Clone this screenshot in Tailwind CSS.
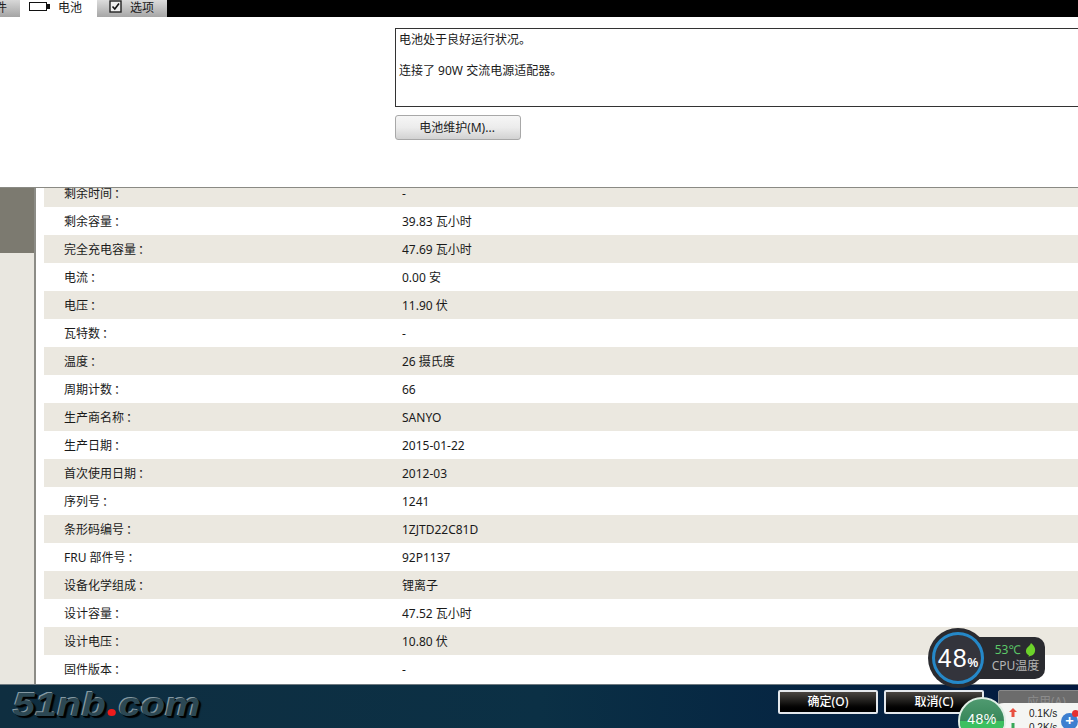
<!DOCTYPE html>
<html lang="zh"><head><meta charset="utf-8"><script src="https://cdn.jsdelivr.net/npm/@tailwindcss/browser@4"></script></head>
<body class="m-0 bg-white">
<div class="relative w-[1078px] h-[728px] overflow-hidden flex flex-col text-[12px] text-[#1a1a1a] font-['Noto_Sans','Noto_Sans_CJK_SC',sans-serif] [text-spacing-trim:space-all] [&_i]:not-italic [&_i]:relative [&_i]:left-[2px]">
  <!-- tab strip -->
  <div class="h-[17px] shrink-0 bg-black flex items-start leading-[14px]">
    <div class="w-[20px] h-[17px] bg-gradient-to-b from-[#d8d8d8] to-[#a4a4a4] text-[#222] overflow-hidden flex justify-end pr-[13px] pt-[1px]"><span class="shrink-0">件</span></div>
    <div class="w-[77px] h-[18px] bg-white flex items-center gap-[8px] pl-[9px] relative z-10 pb-[2px]">
      <svg width="21" height="9" viewBox="0 0 21 9" class="shrink-0 -mt-[3px]"><rect x="0.5" y="0.5" width="17" height="8" fill="#fff" stroke="#111"/><rect x="18" y="2" width="3" height="5" fill="#111"/></svg>
      <span>电池</span>
    </div>
    <div class="w-[70px] h-[17px] bg-gradient-to-b from-[#dcdcdc] to-[#a6a6a6] flex items-center gap-[8px] pl-[12px] pb-[1px]">
      <svg width="13" height="13" viewBox="0 0 13 13" class="shrink-0 -mt-[3px]"><rect x="1" y="1" width="11" height="11" fill="#eee" stroke="#222" stroke-width="1.4"/><path d="M3.5 6.5 L5.8 9 L10 3.5" fill="none" stroke="#111" stroke-width="1.6"/></svg>
      <span>选项</span>
    </div>
  </div>
  <!-- status panel -->
  <div class="h-[171px] shrink-0 bg-white pl-[395px] pt-[11px] border-b border-[#8a8a84]">
    <div class="h-[79px] w-[700px] border border-[#333] pl-[3px] pt-[3px] leading-[16px]">
      <p class="m-0">电池处于良好运行状况。</p>
      <p class="m-0 mt-[15px]">连接了 90W 交流电源适配器。</p>
    </div>
    <button class="block mt-[8px] w-[126px] h-[25px] rounded-[3px] border border-[#a8a8a8] bg-gradient-to-b from-[#f6f6f6] via-[#ececec] to-[#d2d2d2] text-[12px] text-[#222] leading-[20px] pr-[2px]">电池维护(M)...</button>
  </div>
  <!-- main -->
  <div class="flex-1 flex min-h-0">
    <div class="w-[34px] shrink-0 bg-[#e9e7e0]">
      <div class="h-[65px] bg-[#7c7a70]"></div>
    </div>
    <div class="w-[2px] shrink-0 bg-[#8c8c86]"></div>
    <div class="flex-1 bg-white pl-[8px] overflow-hidden">
      <div class="-mt-[9px] leading-[30px]">
        <div class="h-[28px] bg-[#ebe8e0] flex"><span class="w-[358px] pl-[20px]">剩余时间<i>：</i></span><span>-</span></div>
        <div class="h-[28px] flex"><span class="w-[358px] pl-[20px]">剩余容量<i>：</i></span><span>39.83 瓦小时</span></div>
        <div class="h-[28px] bg-[#ebe8e0] flex"><span class="w-[358px] pl-[20px]">完全充电容量<i>：</i></span><span>47.69 瓦小时</span></div>
        <div class="h-[28px] flex"><span class="w-[358px] pl-[20px]">电流<i>：</i></span><span>0.00 安</span></div>
        <div class="h-[28px] bg-[#ebe8e0] flex"><span class="w-[358px] pl-[20px]">电压<i>：</i></span><span>11.90 伏</span></div>
        <div class="h-[28px] flex"><span class="w-[358px] pl-[20px]">瓦特数<i>：</i></span><span>-</span></div>
        <div class="h-[28px] bg-[#ebe8e0] flex"><span class="w-[358px] pl-[20px]">温度<i>：</i></span><span>26 摄氏度</span></div>
        <div class="h-[28px] flex"><span class="w-[358px] pl-[20px]">周期计数<i>：</i></span><span>66</span></div>
        <div class="h-[28px] bg-[#ebe8e0] flex"><span class="w-[358px] pl-[20px]">生产商名称<i>：</i></span><span>SANYO</span></div>
        <div class="h-[28px] flex"><span class="w-[358px] pl-[20px]">生产日期<i>：</i></span><span>2015-01-22</span></div>
        <div class="h-[28px] bg-[#ebe8e0] flex"><span class="w-[358px] pl-[20px]">首次使用日期<i>：</i></span><span>2012-03</span></div>
        <div class="h-[28px] flex"><span class="w-[358px] pl-[20px]">序列号<i>：</i></span><span>1241</span></div>
        <div class="h-[28px] bg-[#ebe8e0] flex"><span class="w-[358px] pl-[20px]">条形码编号<i>：</i></span><span>1ZJTD22C81D</span></div>
        <div class="h-[28px] flex"><span class="w-[358px] pl-[20px]">FRU 部件号<i>：</i></span><span>92P1137</span></div>
        <div class="h-[28px] bg-[#ebe8e0] flex"><span class="w-[358px] pl-[20px]">设备化学组成<i>：</i></span><span>锂离子</span></div>
        <div class="h-[28px] flex"><span class="w-[358px] pl-[20px]">设计容量<i>：</i></span><span>47.52 瓦小时</span></div>
        <div class="h-[28px] bg-[#ebe8e0] flex"><span class="w-[358px] pl-[20px]">设计电压<i>：</i></span><span>10.80 伏</span></div>
        <div class="h-[28px] flex"><span class="w-[358px] pl-[20px]">固件版本<i>：</i></span><span>-</span></div>
      </div>
    </div>
  </div>
  <!-- footer -->
  <div class="h-[44px] shrink-0 border-t border-[#6f7a80] bg-gradient-to-r from-[#0f2e40] via-[#0b3045] to-[#03193f] flex items-start justify-between">
    <div class="flex items-baseline pl-[11px] font-['Liberation_Sans',sans-serif] font-bold italic text-[34px] leading-[38px] text-[#2c4854] origin-left scale-x-[1.17] [text-shadow:1px_1px_0_#000,2px_2px_1px_#000,-1px_-1px_0_#8498a2]">51nb<span class="inline-block w-[7px] h-[7px] rounded-full bg-[#ee1c1c] mx-[2px]"></span>com</div>
    <div class="flex gap-[6px] pt-[5px] -mr-[20px]">
      <button class="w-[100px] h-[24px] rounded-[2px] border-2 border-[#e4e8ec] bg-gradient-to-b from-[#4a4642] via-[#1b1a18] to-[#000] text-white text-[12px] font-medium">确定(O)</button>
      <button class="w-[100px] h-[24px] rounded-[2px] border-2 border-[#e4e8ec] bg-gradient-to-b from-[#4a4642] via-[#1b1a18] to-[#000] text-white text-[12px] font-medium">取消(C)</button>
      <button class="w-[100px] h-[24px] ml-[8px] rounded-[2px] border border-[#888] bg-[#6c6c6c] text-[#8c8c8c] text-[12px] text-left pl-[28px]">应用(A)</button>
    </div>
  </div>
  <!-- CPU widget overlay -->
  <div class="absolute left-[972px] top-[637px] w-[73px] h-[42px] rounded-r-[10px] bg-[#2a2b30] flex flex-col items-center justify-center pl-[14px] leading-[16px]">
    <div class="flex items-center gap-[5px] text-[#5cc868] text-[12px]"><span>53℃</span>
      <svg width="11" height="14" viewBox="0 0 11 14"><path d="M6 0 C10 3 11 7 9.5 10 C8.5 12 6.5 13 5 13 L3.5 14 L4 12.5 C1 11 0 8 2 5 C3 3.5 5 3 6 0Z" fill="#6cd22a"/></svg>
    </div>
    <div class="text-[#b4b4b4] text-[12px] whitespace-nowrap">CPU温度</div>
  </div>
  <div class="absolute left-[928px] top-[628px] w-[60px] h-[60px] rounded-full bg-[#2a2b30] flex items-center justify-center">
    <div class="w-[52px] h-[52px] rounded-full border-[3px] border-[#2588c8] bg-[#33343c] text-white flex items-baseline justify-center leading-[46px] font-['Liberation_Sans',sans-serif] whitespace-nowrap"><span class="text-[25px] tracking-[1px]">48</span><span class="text-[12px] font-bold">%</span></div>
  </div>
  <!-- network widget overlay -->
  <div class="absolute left-[990px] top-[703px] w-[100px] h-[30px] rounded-l-[14px] bg-[#f4f5f3] font-['Liberation_Sans',sans-serif]">
    <svg class="absolute left-[19px] top-[5px]" width="8" height="9" viewBox="0 0 8 9"><path d="M4 0 L8 4 H5.5 V9 H2.5 V4 H0Z" fill="#e85040"/></svg>
    <span class="absolute left-[39px] top-[5px] text-[10px] leading-[12px] text-[#222]">0.1K/s</span>
    <svg class="absolute left-[19px] top-[20px]" width="8" height="9" viewBox="0 0 8 9"><path d="M4 9 L8 5 H5.5 V0 H2.5 V5 H0Z" fill="#38a858"/></svg>
    <span class="absolute left-[39px] top-[19px] text-[10px] leading-[12px] text-[#222]">0.2K/s</span>
  </div>
  <div class="absolute left-[1061px] top-[713px] w-[17px] h-[17px] rounded-full bg-[#3d7fd0] text-white text-[15px] leading-[15px] font-bold text-center">+</div>
  <div class="absolute left-[1072px] top-[710px] w-[7px] h-[7px] rounded-full bg-[#e53030]"></div>
  <div class="absolute left-[958px] top-[697px] w-[48px] h-[48px] rounded-full border-[2px] border-[#dfeee4] overflow-hidden bg-gradient-to-b from-[#4f9a70] to-[#1c7444] text-white text-[14px] text-center leading-[41px] font-['Liberation_Sans',sans-serif]">
    <div class="absolute inset-x-0 top-[22px] bottom-0 bg-[#3cc060]"></div>
    <span class="relative tracking-[0.5px]">48%</span>
  </div>
</div>
</body></html>
